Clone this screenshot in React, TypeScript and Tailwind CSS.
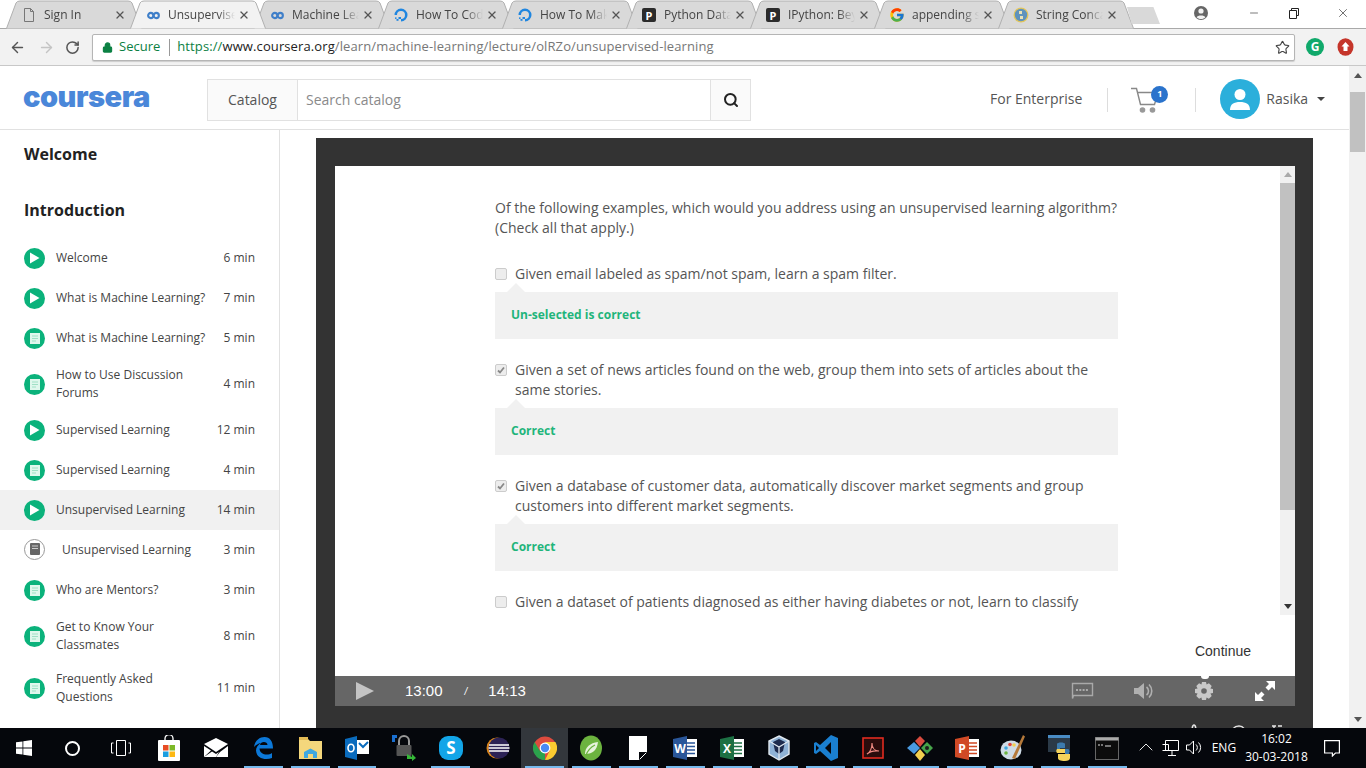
import React from "react";
import { ArrowLeft, ArrowRight, RotateCw, Lock, Star, Search, X, Minus, ChevronUp } from "lucide-react";
import { FcGoogle } from "react-icons/fc";

const tabs = [
  { title: "Sign In", icon: "doc" },
  { title: "Unsupervised Learning", icon: "cc", active: true },
  { title: "Machine Learning", icon: "cc" },
  { title: "How To Code in Python", icon: "do" },
  { title: "How To Make a", icon: "do" },
  { title: "Python Data Analysis", icon: "p" },
  { title: "IPython: Beyond", icon: "p" },
  { title: "appending strings", icon: "g" },
  { title: "String Concatenation", icon: "py" },
];

const lessons = [
  { title: "Welcome", time: "6 min", type: "play" },
  { title: "What is Machine Learning?", time: "7 min", type: "play" },
  { title: "What is Machine Learning?", time: "5 min", type: "read" },
  { title: "How to Use Discussion Forums", time: "4 min", type: "read" },
  { title: "Supervised Learning", time: "12 min", type: "play" },
  { title: "Supervised Learning", time: "4 min", type: "read" },
  { title: "Unsupervised Learning", time: "14 min", type: "play", active: true },
  { title: "Unsupervised Learning", time: "3 min", type: "quiz" },
  { title: "Who are Mentors?", time: "3 min", type: "read" },
  { title: "Get to Know Your Classmates", time: "8 min", type: "read" },
  { title: "Frequently Asked Questions", time: "11 min", type: "read" },
];

function Favicon({ kind }: { kind: string }) {
  if (kind === "doc")
    return (
      <svg width="12" height="16" viewBox="0 0 12 16" fill="none" stroke="#777" strokeWidth="1">
        <path d="M1.5 1.5h6l3 3v10h-9z M7.5 1.5v3h3" />
      </svg>
    );
  if (kind === "cc")
    return (
      <svg width="13" height="9" viewBox="0 0 16 10" fill="none" stroke="#3f7fc9" strokeWidth="2.6">
        <circle cx="4.6" cy="5" r="3.2" />
        <circle cx="11.4" cy="5" r="3.2" />
      </svg>
    );
  if (kind === "do")
    return (
      <svg width="16" height="16" viewBox="0 0 16 16" fill="none">
        <path d="M8 14.5V12a4 4 0 1 0-4-4H1.5A6.5 6.5 0 1 1 8 14.5z" fill="#1f86e0" />
        <rect x="5.5" y="10" width="2.5" height="2" fill="#1f86e0" />
        <rect x="3.5" y="12" width="2" height="1.8" fill="#1f86e0" />
        <rect x="2" y="10.4" width="1.5" height="1.5" fill="#1f86e0" />
      </svg>
    );
  if (kind === "p")
    return (
      <span className="flex h-[14px] w-[14px] items-center justify-center rounded-[2px] bg-[#2b2b2b] text-[11px] leading-none font-bold text-white">
        P
      </span>
    );
  if (kind === "g") return <FcGoogle size={16} />;
  return (
    <svg width="16" height="16" viewBox="0 0 16 16">
      <circle cx="8" cy="8" r="7.5" fill="#e4c65a" />
      <circle cx="8" cy="8" r="6.2" fill="#5f93bd" />
      <path d="M6 4h3v3H6zM7 9h3v3H7z" fill="#e8e2b8" />
    </svg>
  );
}

function Tab({ title, icon, active }: { title: string; icon: string; active?: boolean }) {
  return (
    <div className={`relative flex h-[28px] w-[124px] shrink-0 items-center ${active ? "z-10" : ""}`}>
      <svg className="absolute top-0 left-0" width="136" height="29" viewBox="0 0 136 29">
        <path
          d="M0.5 28.5 L10 3 Q11 1 14 1 L122 1 Q125 1 126 3 L135.5 28.5"
          fill={active ? "#f2f2f2" : "#d9d9d9"}
          stroke="#b0b0b0"
          strokeWidth="1"
        />
      </svg>
      <div className="relative ml-[13px] flex w-[20px] shrink-0 justify-center pt-[2px]">
        <Favicon kind={icon} />
      </div>
      <span className="relative ml-[5px] w-[67px] overflow-hidden pt-[2px] text-[12px] leading-[26px] whitespace-nowrap text-[#444] font-['Open_Sans',sans-serif] [mask-image:linear-gradient(to_right,black_75%,transparent)]">
        {title}
      </span>
      <X className="relative mt-[2px] ml-[3px] shrink-0 text-[#555]" size={12} strokeWidth={2.6} />
    </div>
  );
}

function ChromeBar() {
  return (
    <div className="flex h-[29px] shrink-0 items-start border-b border-[#a9a9a9] bg-white pl-[6px]">
      {tabs.map((t) => (
        <Tab key={t.title} title={t.title} icon={t.icon} active={t.active} />
      ))}
      <div className="mt-[7px] ml-[5px] h-[17px] w-[33px] bg-[#d9d9d9] [clip-path:polygon(0_0,80%_0,100%_100%,14%_100%)]" />
      <div className="ml-auto flex h-[28px] items-center">
        <svg width="14" height="14" viewBox="0 0 14 14" className="mb-[2px]">
          <circle cx="7" cy="7" r="7" fill="#666" />
          <circle cx="7" cy="5" r="2.6" fill="#f2f2f2" />
          <path d="M2.6 11.2c1-2.4 7.8-2.4 8.8 0-2 2.4-6.800 2.400-8.800 0z" fill="#f2f2f2" />
        </svg>
        <Minus className="mb-[2px] ml-[40px] text-[#222]" size={12} strokeWidth={1.2} />
        <svg width="10" height="11" viewBox="0 0 10 11" fill="none" stroke="#222" className="mb-[2px] ml-[29px]">
          <path d="M2.500 2.500v-2h7v7h-2M.5 2.500h7v8h-7z" />
        </svg>
        <X className="mr-[16px] mb-[2px] ml-[37px] text-[#222]" size={14} strokeWidth={1.1} />
      </div>
    </div>
  );
}

function AddressBar() {
  return (
    <div className="flex h-[37px] shrink-0 items-center border-b border-[#c8c8c8] bg-[#f2f2f2] font-['Open_Sans',sans-serif]">
      <ArrowLeft className="ml-[9px] text-[#555]" size={17} strokeWidth={2} />
      <ArrowRight className="ml-[12px] text-[#c4c4c4]" size={17} strokeWidth={2} />
      <RotateCw className="ml-[10px] text-[#555]" size={15} strokeWidth={2.4} />
      <div className="ml-[12px] flex h-[27px] w-[1203px] items-center rounded-[2px] border border-[#b5b5b5] bg-white shadow-[0_1px_1px_#ccc]">
        <Lock className="ml-[9px] text-[#0b8043]" size={11} fill="#0b8043" strokeWidth={2.4} />
        <span className="ml-[6px] text-[13px] text-[#0b8043]">Secure</span>
        <span className="ml-[9px] h-[17px] w-px bg-[#999]" />
        <span className="ml-[7px] text-[13px] tracking-[0.11px] whitespace-nowrap text-[#777]">
          <span className="text-[#0b8043]">https://</span>
          <span className="text-[#222]">www.coursera.org</span>/learn/machine-learning/lecture/olRZo/unsupervised-learning
        </span>
        <Star className="mr-[4px] ml-auto text-[#444]" size={15} strokeWidth={1.8} />
      </div>
      <div className="ml-[11px] flex h-[18px] w-[18px] items-center justify-center rounded-full bg-[#10a96b] text-[12px] font-bold text-white">
        G
      </div>
      <svg className="ml-[13px]" width="17" height="18" viewBox="0 0 17 18">
        <ellipse cx="8.500" cy="9" rx="8" ry="8.700" fill="#c5352a" />
        <path d="M8.500 4l4 4.500H10.500V13h-4V8.500H4.500z" fill="#fff" />
      </svg>
    </div>
  );
}

function CartIcon() {
  return (
    <svg width="30" height="27" viewBox="0 0 30 27" fill="none">
      <path d="M0 1.500h5.500l4 16h14l3.500-12H7" stroke="#888" strokeWidth="1.400" />
      <circle cx="11.500" cy="23" r="2.800" fill="#999" />
      <circle cx="21.500" cy="23" r="2.800" fill="#999" />
    </svg>
  );
}

function SiteHeader() {
  return (
    <div className="flex h-[64px] shrink-0 items-center border-b border-[#e1e1e1] bg-white pt-[5px] font-['Open_Sans',sans-serif]">
      <span className="mb-[8px] ml-[23px] w-[184px] font-['Inter',sans-serif] text-[29px] leading-none font-black tracking-[-0.5px] text-[#4a87d9]">
        coursera
      </span>
      <div className="flex h-[42px] w-[544px] border border-[#e1e1e1]">
        <div className="flex w-[90px] items-center justify-center border-r border-[#e1e1e1] bg-[#fafafa] pb-[2px] text-[14px] text-[#555]">
          Catalog
        </div>
        <div className="flex flex-1 items-center pb-[2px] pl-[8px] text-[14px] text-[#8a8a8a]">Search catalog</div>
        <div className="flex w-[40px] items-center justify-center border-l border-[#e1e1e1] bg-[#fafafa]">
          <Search className="text-[#222]" size={16} strokeWidth={3} />
        </div>
      </div>
      <span className="mb-[4px] ml-[239px] text-[14px] text-[#555]">For Enterprise</span>
      <span className="ml-[25px] h-[24px] w-px bg-[#ddd]" />
      <div className="relative ml-[23px] h-[27px] w-[30px]">
        <CartIcon />
        <span className="absolute -top-[1px] left-[20px] flex h-[17px] w-[17px] items-center justify-center rounded-full bg-[#2a73cc] text-[9px] font-bold text-white">
          1
        </span>
      </div>
      <span className="ml-[34px] h-[24px] w-px bg-[#ddd]" />
      <div className="mb-[2px] ml-[24px] flex h-[40px] w-[40px] items-center justify-center rounded-full bg-[#2bafdb]">
        <svg width="26" height="26" viewBox="0 0 26 26" fill="#fff">
          <circle cx="13" cy="8.500" r="5.500" />
          <path d="M3 24c0-6 4-8 10-8s10 2 10 8z" />
        </svg>
      </div>
      <span className="mb-[4px] ml-[6px] text-[14px] text-[#555]">Rasika</span>
      <span className="mb-[2px] ml-[9px] h-0 w-0 border-x-[4px] border-t-[4px] border-x-transparent border-t-[#444]" />
    </div>
  );
}

function LessonIcon({ type }: { type: string }) {
  if (type === "quiz")
    return (
      <span className="mb-[2px] flex h-[21px] w-[21px] shrink-0 items-center justify-center rounded-full border border-[#999] bg-white">
        <svg width="10" height="12" viewBox="0 0 10 12">
          <rect width="10" height="12" rx="1" fill="#666" />
          <path d="M2 3h6M2 5.500h6" stroke="#ccc" strokeWidth="1" />
        </svg>
      </span>
    );
  return (
    <span className="flex h-[21px] w-[21px] shrink-0 items-center justify-center rounded-full bg-[#0bb27b]">
      {type === "play" ? (
        <svg width="11" height="12" viewBox="0 0 11 12">
          <path d="M1 0.500L10.500 6 1 11.500z" fill="#fff" />
        </svg>
      ) : (
        <svg width="10" height="11" viewBox="0 0 10 11">
          <rect width="10" height="11" fill="#dff7ec" />
          <path d="M2 3h6M2 5.500h6M2 8h4" stroke="#9fe0c5" strokeWidth="1" />
        </svg>
      )}
    </span>
  );
}

function Sidebar() {
  return (
    <aside className="h-full w-[280px] shrink-0 overflow-hidden border-r border-[#e1e1e1] bg-white font-['Open_Sans',sans-serif]">
      <h3 className="mt-[13px] pl-[24px] text-[16px] leading-[22px] font-bold text-[#222]">Welcome</h3>
      <h3 className="mt-[34px] pl-[24px] text-[16px] leading-[22px] font-bold text-[#222]">Introduction</h3>
      <ul className="mt-[17px]">
        {lessons.map((l, i) => (
          <li
            key={i}
            className={`flex min-h-[40px] items-center py-[8px] pr-[24px] pl-[24px] ${l.active ? "bg-[#f1f1f1]" : ""}`}
          >
            <LessonIcon type={l.type} />
            <span
              className={`text-[12px] leading-[18px] text-[#444] ${l.type === "quiz" ? "pl-[17px] whitespace-nowrap" : "w-[162px] pl-[11px]"}`}
            >
              {l.title}
            </span>
            <span className="ml-auto shrink-0 text-[12px] leading-[18px] whitespace-nowrap text-[#444]">{l.time}</span>
          </li>
        ))}
      </ul>
    </aside>
  );
}

function Option({ text, checked, feedback }: { text: string; checked?: boolean; feedback?: string }) {
  return (
    <div className="mt-[21px]">
      <div className="flex items-start">
        <span className="mt-[4px] flex h-[12px] w-[12px] shrink-0 items-center justify-center rounded-[2px] border border-[#ccc] bg-[#ededed]">
          {checked && (
            <svg width="8" height="8" viewBox="0 0 8 8" fill="none" stroke="#888" strokeWidth="1.800">
              <path d="M1 4.500l2 2 4-5" />
            </svg>
          )}
        </span>
        <p className="ml-[8px] text-[14px] leading-[20px] text-[#555]">{text}</p>
      </div>
      {feedback && (
        <div className="relative mt-[8px] flex h-[47px] items-center bg-[#f1f1f1] pb-[2px] pl-[16px] text-[12px] font-bold text-[#1fb57b]">
          <span className="absolute -top-[9px] left-[12px] h-0 w-0 border-x-[9px] border-b-[9px] border-x-transparent border-b-[#f1f1f1]" />
          {feedback}
        </div>
      )}
    </div>
  );
}

function QuizPanel() {
  return (
    <div className="relative h-[449px] overflow-hidden bg-white font-['Open_Sans',sans-serif]">
      <div className="ml-[160px] w-[623px] pt-[32px]">
        <p className="text-[14px] leading-[20px] text-[#555]">
          Of the following examples, which would you address using an unsupervised learning algorithm? (Check all that apply.)
        </p>
        <div className="h-[5px]" />
        <Option text="Given email labeled as spam/not spam, learn a spam filter." feedback="Un-selected is correct" />
        <Option
          checked
          text="Given a set of news articles found on the web, group them into sets of articles about the same stories."
          feedback="Correct"
        />
        <Option
          checked
          text="Given a database of customer data, automatically discover market segments and group customers into different market segments."
          feedback="Correct"
        />
        <Option text="Given a dataset of patients diagnosed as either having diabetes or not, learn to classify" />
      </div>
      {/* inner scrollbar */}
      <div className="absolute top-0 right-0 flex h-full w-[15px] flex-col items-center bg-[#f1f1f1]">
        <span className="mt-[6px] h-0 w-0 border-x-[4px] border-b-[5px] border-x-transparent border-b-[#aaa]" />
        <span className="mt-[6px] h-[327px] w-full bg-[#c1c1c1]" />
        <span className="mt-auto mb-[6px] h-0 w-0 border-x-[4px] border-t-[5px] border-x-transparent border-t-[#333]" />
      </div>
    </div>
  );
}

function VideoControls() {
  return (
    <div className="relative flex h-[30px] items-center bg-[#666] font-['Liberation_Sans',sans-serif] text-[15px] text-white">
      <svg className="ml-[21px]" width="18" height="18" viewBox="0 0 18 18">
        <path d="M0 0L18 9 0 18z" fill="#c4c4c4" />
      </svg>
      <span className="ml-[31px] pt-[1px]">13:00</span>
      <span className="ml-[22px] text-[10px] italic">/</span>
      <span className="ml-[21px] pt-[1px]">14:13</span>
      <svg className="ml-[545px]" width="23" height="18" viewBox="0 0 23 18" fill="none" stroke="#a9a9a9">
        <path d="M1.500 1.500h20v12h-19l-1 3z" strokeWidth="1.400" />
        <path d="M5 8h13" strokeWidth="2" strokeDasharray="2 1.300" />
      </svg>
      <svg className="ml-[40px]" width="21" height="18" viewBox="0 0 21 18" fill="#b0b0b0">
        <path d="M0 6h4l6-5v16l-6-5H0z" />
        <path d="M12.500 5a5 5 0 0 1 0 8M15 2.500a9 9 0 0 1 0 13" fill="none" stroke="#b0b0b0" strokeWidth="1.600" />
      </svg>
      <svg className="ml-[40px]" width="18" height="18" viewBox="0 0 18 18" fill="#c8c8c8">
        <path d="M7 0h4l.6 2.600 2.300-1.300 2.800 2.800-1.300 2.300L18 7v4l-2.600.6 1.300 2.300-2.800 2.800-2.300-1.300L11 18H7l-.6-2.600-2.300 1.300-2.800-2.800 1.300-2.300L0 11V7l2.600-.6-1.300-2.300 2.800-2.800 2.300 1.300z" />
        <circle cx="9" cy="9" r="2.800" fill="#666" />
      </svg>
      <svg className="ml-[42px]" width="20" height="20" viewBox="0 0 20 20" fill="#fff">
        <path d="M11 0h9v9l-3-3-3.500 3.500-3-3L14 3zM9 20H0v-9l3 3 3.500-3.500 3 3L6 17z" />
      </svg>
      <span className="absolute -top-[3px] left-[866px] h-[6px] w-[8px] rounded-full bg-white" />
    </div>
  );
}

function Player() {
  return (
    <div className="mt-[8px] ml-[36px] h-[590px] w-[997px] overflow-hidden bg-[#333] pt-[28px] pl-[19px]">
      <div className="w-[960px]">
        <QuizPanel />
        <div className="flex h-[61px] items-start justify-end bg-white pt-[27px] pr-[44px] font-['Liberation_Sans',sans-serif] text-[14px] leading-[18px] text-[#333]">
          Continue
        </div>
        <VideoControls />
        {/* tops of the icons under the player, cut off by the taskbar */}
        <div className="mt-[17px] flex justify-end pr-[13px]">
          <svg width="100" height="8" viewBox="0 0 100 8" fill="none" stroke="#e6e6e6" strokeWidth="1.400">
            <path d="M10 8c0-3 1-6 2-6s2 3 2 6" />
            <path d="M50 8c1-3 4-5 7-5s5 1 6 5" />
            <path d="M90 3h4M96 3h4M92 8V3" />
          </svg>
        </div>
      </div>
    </div>
  );
}

function PageScrollbar() {
  return (
    <div className="absolute top-0 right-0 flex h-full w-[17px] flex-col items-center bg-[#f1f1f1]">
      <span className="mt-[7px] h-0 w-0 border-x-[4px] border-b-[5px] border-x-transparent border-b-[#555]" />
      <span className="mt-[14px] h-[60px] w-[15px] bg-[#c1c1c1]" />
      <span className="mt-auto mb-[6px] h-0 w-0 border-x-[4px] border-t-[5px] border-x-transparent border-t-[#555]" />
    </div>
  );
}

/* taskbar icons, all in a 24 box */
function TaskIcon({ name }: { name: string }) {
  switch (name) {
    case "store":
      return (
        <svg width="24" height="26" viewBox="0 0 24 26">
          <path d="M8 6V3.500a4 4 0 0 1 8 0V6" fill="none" stroke="#fff" strokeWidth="1.300" />
          <rect x="1" y="5" width="22" height="21" rx="1" fill="#fff" />
          <rect x="6" y="10" width="5.500" height="5.500" fill="#e74c24" />
          <rect x="12.500" y="10" width="5.500" height="5.500" fill="#7db928" />
          <rect x="6" y="16.500" width="5.500" height="5.500" fill="#1c9ee0" />
          <rect x="12.500" y="16.500" width="5.500" height="5.500" fill="#fdb813" />
        </svg>
      );
    case "mail":
      return (
        <svg width="24" height="20" viewBox="0 0 24 20" fill="#fff">
          <path d="M0 6L12 0l12 6-12 8z" />
          <path d="M0 8l7 4.500L0 19zM24 8v11H12l4-5z" />
          <path d="M8 13.500l4 2.500 3-2-3 5H0z" />
        </svg>
      );
    case "edge":
      return (
        <svg width="22" height="24" viewBox="0 0 22 24" fill="none">
          <path d="M2 11C3 4 8 1 12.500 1 18 1 21 5.500 21 12.500H7.500c.3 6 8 7.500 12.500 4.500v5c-6 2.500-15.500 1-16-7.500 0-3 2-6 5-7.500C6 7.500 4 9 2 11z" fill="#0c78d8" />
          <path d="M8 9h7.500c0-4-7-4-7.500 0z" fill="#05070c" />
        </svg>
      );
    case "folder":
      return (
        <svg width="23" height="22" viewBox="0 0 23 22">
          <path d="M0 2h9l2 2h12v18H0z" fill="#f4d77c" />
          <rect x="0" y="0" width="9" height="3" fill="#e4bb55" />
          <path d="M5 21v-6l6.500-3.500L18 15v6h-4v-4H9v4z" fill="#3fa8e0" />
        </svg>
      );
    case "outlook":
      return (
        <svg width="24" height="24" viewBox="0 0 24 24">
          <path d="M12 4h12v14H12z" fill="#fff" />
          <path d="M14 7l4 4 5-5" fill="none" stroke="#0a6bbd" strokeWidth="2" />
          <path d="M0 3l12-3v24L0 21z" fill="#0a6bbd" />
          <ellipse cx="6" cy="12" rx="3" ry="3.800" fill="none" stroke="#fff" strokeWidth="1.600" />
        </svg>
      );
    case "lock":
      return (
        <svg width="24" height="26" viewBox="0 0 24 26">
          <path d="M0 0h5v3H3v4H0z" fill="#1a6fd0" />
          <path d="M7 10V6a5 5 0 0 1 10 0v4" fill="none" stroke="#999" strokeWidth="2" />
          <rect x="4.500" y="10" width="15" height="11" rx="1" fill="#555" />
          <path d="M15 19l5 3v-3l4 4-4 3v-2h-5z" fill="#35b838" />
        </svg>
      );
    case "skype":
      return (
        <svg width="24" height="24" viewBox="0 0 24 24">
          <rect x="0" y="0" width="24" height="24" rx="9" fill="#12a5e8" />
          <text x="12" y="18" textAnchor="middle" fontSize="17" fontWeight="700" fill="#fff" fontFamily="'Open Sans',sans-serif">S</text>
        </svg>
      );
    case "eclipse":
      return (
        <svg width="24" height="24" viewBox="0 0 24 24">
          <circle cx="11" cy="12" r="10.500" fill="#d9851d" />
          <circle cx="13" cy="12" r="10.500" fill="#2c2255" />
          <path d="M3 9h20M2.500 12h21M3 15h20" stroke="#fff" strokeWidth="1.300" />
        </svg>
      );
    case "chrome":
      return (
        <svg width="24" height="24" viewBox="0 0 24 24">
          <circle cx="12" cy="12" r="11.500" fill="#dd4b3e" />
          <path d="M12 24A12 12 0 0 1 1.600 6L7 15l5 1z" fill="#2ba24c" />
          <path d="M12 24a12 12 0 0 0 10.400-18H12l5 8z" fill="#fbcb30" />
          <circle cx="12" cy="12" r="5.400" fill="#fff" />
          <circle cx="12" cy="12" r="4.200" fill="#4a89f3" />
        </svg>
      );
    case "spring":
      return (
        <svg width="24" height="26" viewBox="0 0 24 26">
          <ellipse cx="12" cy="13" rx="11" ry="12.500" fill="#6cb33f" />
          <path d="M6 19c0-7 5-11 13-12-1 8-5 12-13 12z" fill="#e7f3dc" />
          <path d="M7 20c2-5 5-8 9-10" stroke="#6cb33f" strokeWidth="1.200" fill="none" />
        </svg>
      );
    case "sticky":
      return (
        <svg width="18" height="24" viewBox="0 0 18 24">
          <path d="M0 0h18v16l-8 8H0z" fill="#fff" />
          <path d="M10 24v-8h8z" fill="#05070c" />
          <path d="M11 23l6-6" stroke="#fff" strokeWidth="1" />
        </svg>
      );
    case "word":
    case "excel":
    case "ppt": {
      const bg = name === "word" ? "#2a5699" : name === "excel" ? "#1d7044" : "#d04a26";
      const letter = name === "word" ? "W" : name === "excel" ? "X" : "P";
      return (
        <svg width="24" height="24" viewBox="0 0 24 24">
          <rect x="11" y="3" width="13" height="18" fill="#fff" />
          <path d="M14 7h8M14 10.500h8M14 14h8M14 17.500h8" stroke={bg} strokeWidth="1.400" />
          <path d="M0 3l14-3v24L0 21z" fill={bg} />
          <text x="7" y="16.500" textAnchor="middle" fontSize="12" fontWeight="700" fill="#fff" fontFamily="'Open Sans',sans-serif">{letter}</text>
        </svg>
      );
    }
    case "vbox":
      return (
        <svg width="24" height="26" viewBox="0 0 24 26" fill="none">
          <path d="M12 1l10 5v13l-10 6-10-6V6z" fill="#8fb2d6" stroke="#dfe7ef" strokeWidth="1.400" />
          <path d="M6 7l6-3 6 3-2 9-4 3-4-3z" fill="#1d2a4d" />
          <path d="M2 6l10 6 10-6M12 12v13" stroke="#dfe7ef" strokeWidth="1.300" />
        </svg>
      );
    case "vscode":
      return (
        <svg width="24" height="26" viewBox="0 0 24 26">
          <path d="M17 0l7 3v20l-7 3-11-10-4 3-2-1V8l2-1 4 3z" fill="#1a7fd0" />
          <path d="M17 7l-6 6 6 6z" fill="#05070c" />
          <path d="M2 10l3 3-3 3z" fill="#05070c" />
        </svg>
      );
    case "pdf":
      return (
        <svg width="22" height="22" viewBox="0 0 22 22" fill="none">
          <rect x="1" y="1" width="20" height="20" fill="#2a0c0c" stroke="#e02b20" strokeWidth="1.600" />
          <path d="M5 17c3-1 5-6 5-11 0 5 3 8 7 8-4-.5-9 .5-12 3z" stroke="#ee8a82" strokeWidth="1.100" />
        </svg>
      );
    case "git":
      return (
        <svg width="26" height="26" viewBox="0 0 26 26">
          <path d="M13 13L7 7 0 13l7 6z" fill="#4a9ae0" />
          <path d="M13 1l5 5-5 6-5-6z" fill="#d94b3e" />
          <path d="M14 13l6-6 6 6-6 6z" fill="#47a44a" />
          <path d="M13 14l5 6-5 6-5-6z" fill="#f2cf4f" />
          <circle cx="20" cy="13" r="2" fill="#1d1d1d" />
        </svg>
      );
    case "paint":
      return (
        <svg width="26" height="26" viewBox="0 0 26 26">
          <ellipse cx="11" cy="15" rx="10.500" ry="9.500" fill="#cfdbe6" />
          <circle cx="6" cy="13" r="1.800" fill="#3fa8e0" />
          <circle cx="10" cy="9.500" r="1.800" fill="#e0433a" />
          <circle cx="6" cy="18" r="1.800" fill="#6cb33f" />
          <circle cx="14" cy="10" r="1.800" fill="#f2cf4f" />
          <path d="M23 0l2 1.500L15 24l-3-1z" fill="#b5793a" />
        </svg>
      );
    case "python":
      return (
        <svg width="24" height="26" viewBox="0 0 24 26">
          <rect x="0" y="0" width="22" height="17" fill="#2b3a48" />
          <rect x="0" y="0" width="22" height="3" fill="#4a8cc4" />
          <path d="M9 9c0-2 8-2 8 0v4H12v1h8c2 0 2 6 0 6h-3v-4H9z" fill="#3c7bad" />
          <path d="M17 26c-5 0-7-1-7-3v-4h7v-1H9c-1-1-1-3 0-4h8v5h5v4c0 2-2 3-5 3z" fill="#f4d35b" />
        </svg>
      );
    case "cmd":
      return (
        <svg width="24" height="23" viewBox="0 0 24 23">
          <rect x="0.500" y="0.500" width="23" height="22" fill="#0c0c0c" stroke="#666" />
          <rect x="0.500" y="0.500" width="23" height="3" fill="#aaa" />
          <path d="M3 8h2M6 8h2M10 9h6" stroke="#ddd" strokeWidth="1.200" />
        </svg>
      );
    default:
      return null;
  }
}

const taskIcons = [
  { name: "store" },
  { name: "mail" },
  { name: "edge", on: true },
  { name: "folder", on: true },
  { name: "outlook", on: true },
  { name: "lock" },
  { name: "skype", on: true },
  { name: "eclipse" },
  { name: "chrome", on: true, current: true },
  { name: "spring", on: true },
  { name: "sticky", on: true },
  { name: "word", on: true },
  { name: "excel", on: true },
  { name: "vbox", on: true },
  { name: "vscode", on: true },
  { name: "pdf", on: true },
  { name: "git", on: true },
  { name: "ppt", on: true },
  { name: "paint", on: true },
  { name: "python", on: true },
  { name: "cmd", on: true },
];

function Taskbar() {
  return (
    <div className="flex h-[40px] shrink-0 items-stretch bg-[#05070c] font-['Open_Sans',sans-serif] text-white">
      <div className="flex w-[48px] items-center justify-center">
        <svg width="16" height="16" viewBox="0 0 16 16" fill="#fff">
          <path d="M0 2.300l6.500-.9v6.200H0zM7.300 1.300L16 0v7.600H7.300zM0 8.400h6.500v6.200L0 13.700zM7.300 8.400H16V16l-8.700-1.200z" />
        </svg>
      </div>
      <div className="flex w-[48px] items-center justify-center">
        <span className="h-[15px] w-[15px] rounded-full border-2 border-white" />
      </div>
      <div className="flex w-[50px] items-center justify-center">
        <svg width="20" height="16" viewBox="0 0 20 16" fill="none" stroke="#fff" strokeWidth="1">
          <path d="M5.500.5h9v15h-9zM2.500 3H.5v10h2M17.500 3h2v10h-2" />
        </svg>
      </div>
      {taskIcons.map((t) => (
        <div
          key={t.name}
          className={`relative flex w-[46.900px] items-center justify-center ${t.current ? "bg-[#33373c]" : ""}`}
        >
          <TaskIcon name={t.name} />
          {t.on && <span className="absolute right-[4px] bottom-0 left-[4px] h-[2px] bg-[#76b9ed]" />}
        </div>
      ))}
      <ChevronUp className="mt-[7px] ml-[3px] text-white" size={24} strokeWidth={0.9} />
      <svg className="mt-[11px] ml-[4px]" width="17" height="18" viewBox="0 0 17 18" fill="none" stroke="#fff">
        <path d="M3.500 1.500h13v10h-13zM.5 5.500h6v6h-6M10 11.500v5M6 16.500h8" />
      </svg>
      <svg className="mt-[12px] ml-[7px]" width="16" height="15" viewBox="0 0 16 15" fill="none" stroke="#fff">
        <path d="M.5 5h3l4-4v13l-4-4h-3zM10 4.500a4 4 0 0 1 0 6M12.500 2.500a7 7 0 0 1 0 10" />
      </svg>
      <span className="mt-[11px] ml-[10px] text-[12px] leading-[18px]">ENG</span>
      <div className="ml-[9px] flex flex-col items-center justify-center text-[12px] leading-[18px]">
        <span>16:02</span>
        <span>30-03-2018</span>
      </div>
      <svg className="mt-[12px] ml-[16px]" width="16" height="17" viewBox="0 0 16 17" fill="none" stroke="#fff" strokeWidth="1.200">
        <path d="M.6.600h14.800v12.400h-4l-3 3v-3H.6z" />
      </svg>
    </div>
  );
}

export default function App() {
  return (
    <div className="flex h-[768px] w-[1366px] flex-col overflow-hidden bg-white">
      <ChromeBar />
      <AddressBar />
      <div className="relative flex flex-1 flex-col overflow-hidden">
        <PageScrollbar />
        <div className="w-[1349px]">
          <SiteHeader />
        </div>
        <div className="flex min-h-0 w-[1349px] flex-1">
          <Sidebar />
          <Player />
        </div>
      </div>
      <Taskbar />
    </div>
  );
}
